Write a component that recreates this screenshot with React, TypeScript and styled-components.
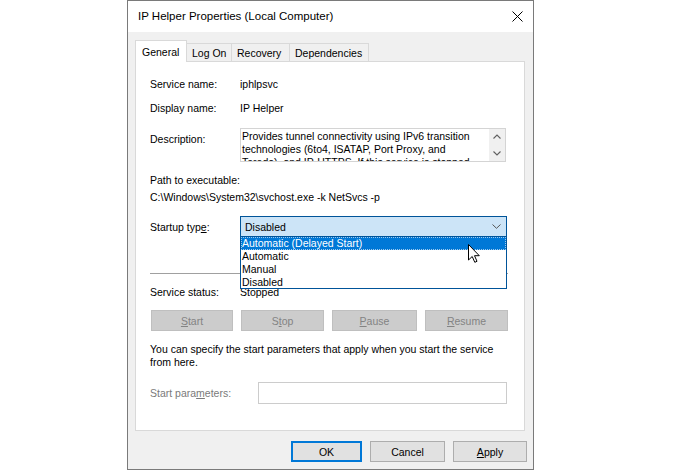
import React from "react";
import styled, { createGlobalStyle } from "styled-components";

const Global = createGlobalStyle`
  html, body { margin: 0; padding: 0; background: #ffffff; }
  body { font-family: "Liberation Sans", Arial, sans-serif; font-size: 10.5px; color: #000; }
  * { box-sizing: border-box; }
`;

const Page = styled.div`
  width: 680px;
  height: 473px;
  padding-left: 127px;
  overflow: hidden;
`;

const Window = styled.div`
  width: 407px;
  height: 470px;
  border: 1px solid #7a7a7a;
  display: flex;
  flex-direction: column;
  background: #f0f0f0;
`;

const TitleBar = styled.div`
  height: 31px;
  flex: none;
  background: #ffffff;
  display: flex;
  align-items: center;
  justify-content: space-between;
  padding: 0 10px 0 10px;
`;

const Title = styled.div`
  font-size: 11.5px;
  color: #000;
  padding-bottom: 1px;
`;

const Body = styled.div`
  flex: 1;
  display: flex;
  flex-direction: column;
  padding: 8px 8px 7px 7px;
`;

const TabStrip = styled.div`
  display: flex;
  align-items: flex-end;
  height: 21px;
`;

const Tab = styled.div<{ $w: number; $active?: boolean }>`
  width: ${(p) => p.$w}px;
  height: ${(p) => (p.$active ? 22 : 18)}px;
  margin-bottom: ${(p) => (p.$active ? -1 : 0)}px;
  background: ${(p) => (p.$active ? "#ffffff" : "#f0f0f0")};
  border: 1px solid #d9d9d9;
  border-bottom: none;
  ${(p) => (p.$active ? "" : "border-left: none;")}
  position: relative;
  z-index: ${(p) => (p.$active ? 1 : 0)};
  display: flex;
  align-items: center;
  padding-left: ${(p) => (p.$active ? 6 : 5)}px;
  padding-top: ${(p) => (p.$active ? 0 : 1)}px;
  font-size: 10.5px;
`;

const Panel = styled.div`
  height: 370px;
  background: #ffffff;
  border: 1px solid #d9d9d9;
  padding: 14px 16px 0 14px;
  display: flex;
  flex-direction: column;
`;

const Row = styled.div<{ $mt?: number; $h?: number }>`
  display: flex;
  align-items: center;
  margin-top: ${(p) => p.$mt ?? 0}px;
  height: ${(p) => p.$h ?? 16}px;
  flex: none;
`;

const TopRow = styled.div<{ $mt?: number }>`
  display: flex;
  align-items: flex-start;
  margin-top: ${(p) => p.$mt ?? 0}px;
  flex: none;
`;

const Label = styled.div<{ $w?: number; $muted?: boolean; $pt?: number }>`
  width: ${(p) => p.$w ?? 90}px;
  flex: none;
  line-height: 16px;
  padding-top: ${(p) => p.$pt ?? 0}px;
  color: ${(p) => (p.$muted ? "#7a7a7a" : "#000")};
  white-space: nowrap;
`;

const Value = styled.div`
  line-height: 16px;
  white-space: nowrap;
`;

const TextLine = styled.div<{ $mt?: number }>`
  line-height: 16px;
  height: 16px;
  margin-top: ${(p) => p.$mt ?? 0}px;
  white-space: nowrap;
  flex: none;
`;

const DescBox = styled.div`
  width: 266px;
  height: 34px;
  border: 1px solid #d4d4d4;
  display: flex;
  overflow: hidden;
`;

const DescText = styled.div`
  flex: 1;
  padding: 1px 0 0 1px;
  overflow: hidden;
  line-height: 13px;
`;

const DescLine = styled.div`
  white-space: nowrap;
  height: 13px;
`;

const ScrollTrack = styled.div`
  width: 16px;
  flex: none;
  background: #f0f0f0;
  display: flex;
  flex-direction: column;
  align-items: center;
  justify-content: space-between;
  padding: 5px 0 5px 0;
`;

const SelectWrap = styled.div`
  position: relative;
  width: 267px;
  height: 21px;
`;

const SelectBox = styled.div`
  height: 21px;
  background: #cce4f7;
  border: 1px solid #005499;
  display: flex;
  align-items: center;
  justify-content: space-between;
  padding: 0 5px 0 4px;
`;

const DropList = styled.div`
  position: absolute;
  left: 0;
  top: 20px;
  width: 267px;
  height: 53px;
  background: #ffffff;
  border: 1px solid #005499;
  z-index: 5;
`;

const DropItem = styled.div<{ $sel?: boolean }>`
  height: 13px;
  line-height: 13px;
  padding-left: 1px;
  background: ${(p) => (p.$sel ? "#0078d7" : "transparent")};
  color: ${(p) => (p.$sel ? "#ffffff" : "#000")};
  outline: ${(p) => (p.$sel ? "1px dotted #9ec9ee" : "none")};
  outline-offset: -1px;
  font-size: 10.5px;
  white-space: nowrap;
`;

const Cursor = styled.svg`
  position: absolute;
  left: 227px;
  top: 7px;
  z-index: 6;
`;

const Separator = styled.div<{ $mt: number }>`
  height: 1px;
  background: #a0a0a0;
  margin-top: ${(p) => p.$mt}px;
  flex: none;
`;

const ButtonRow = styled.div<{ $mt: number }>`
  display: flex;
  justify-content: space-between;
  margin-top: ${(p) => p.$mt}px;
  padding-left: 1px;
  flex: none;
`;

const DisabledButton = styled.div<{ $w: number }>`
  width: ${(p) => p.$w}px;
  height: 21px;
  background: #cccccc;
  border: 1px solid #bfbfbf;
  color: #838383;
  display: flex;
  align-items: center;
  justify-content: center;
`;

const Info = styled.div<{ $mt: number }>`
  margin-top: ${(p) => p.$mt}px;
  line-height: 13px;
  flex: none;
`;

const InfoLine = styled.div`
  white-space: nowrap;
  height: 13px;
`;

const Input = styled.div`
  width: 249px;
  height: 22px;
  border: 1px solid #cccccc;
  background: #ffffff;
`;

const Footer = styled.div`
  display: flex;
  justify-content: flex-end;
  gap: 8px;
  margin-top: 10px;
  margin-right: -2px;
`;

const DialogButton = styled.div<{ $w: number; $default?: boolean }>`
  width: ${(p) => p.$w}px;
  height: 21px;
  background: #e1e1e1;
  border: ${(p) => (p.$default ? "2px solid #0078d7" : "1px solid #adadad")};
  display: flex;
  align-items: center;
  justify-content: center;
  color: #000;
`;

const U = styled.span`
  text-decoration: underline;
  text-underline-offset: 1px;
`;

const Chevron = ({ dir }: { dir: "up" | "down" }) => (
  <svg width="8" height="5" viewBox="0 0 8 5">
    <path
      d={dir === "up" ? "M0.5 4.5 L4 1 L7.5 4.5" : "M0.5 0.5 L4 4 L7.5 0.5"}
      fill="none"
      stroke="#606060"
      strokeWidth="1.1"
    />
  </svg>
);

export default function App() {
  return (
    <>
      <Global />
      <Page>
        <Window>
          <TitleBar>
            <Title>IP Helper Properties (Local Computer)</Title>
            <svg width="11" height="11" viewBox="0 0 11 11">
              <path d="M0.5 0.5 L10.5 10.5 M10.5 0.5 L0.5 10.5" stroke="#000" strokeWidth="1" />
            </svg>
          </TitleBar>
          <Body>
            <TabStrip>
              <Tab $w={52} $active>General</Tab>
              <Tab $w={45}>Log On</Tab>
              <Tab $w={58}>Recovery</Tab>
              <Tab $w={79}>Dependencies</Tab>
            </TabStrip>
            <Panel>
              <Row>
                <Label>Service name:</Label>
                <Value>iphlpsvc</Value>
              </Row>
              <Row $mt={8}>
                <Label>Display name:</Label>
                <Value>IP Helper</Value>
              </Row>
              <TopRow $mt={12}>
                <Label $pt={3}>Description:</Label>
                <DescBox>
                  <DescText>
                    <DescLine>Provides tunnel connectivity using IPv6 transition</DescLine>
                    <DescLine>technologies (6to4, ISATAP, Port Proxy, and</DescLine>
                    <DescLine>Teredo), and IP-HTTPS. If this service is stopped,</DescLine>
                  </DescText>
                  <ScrollTrack>
                    <Chevron dir="up" />
                    <Chevron dir="down" />
                  </ScrollTrack>
                </DescBox>
              </TopRow>
              <TextLine $mt={10}>Path to executable:</TextLine>
              <TextLine $mt={1}>C:\Windows\System32\svchost.exe -k NetSvcs -p</TextLine>
              <Row $mt={11} $h={21}>
                <Label>
                  Startup typ<U>e</U>:
                </Label>
                <SelectWrap>
                  <SelectBox>
                    <span>Disabled</span>
                    <svg width="9" height="5" viewBox="0 0 9 5">
                      <path d="M0.5 0.5 L4.5 4.3 L8.5 0.5" fill="none" stroke="#555" strokeWidth="1" />
                    </svg>
                  </SelectBox>
                  <DropList>
                    <DropItem $sel>Automatic (Delayed Start)</DropItem>
                    <DropItem>Automatic</DropItem>
                    <DropItem>Manual</DropItem>
                    <DropItem>Disabled</DropItem>
                    <Cursor width="12" height="19" viewBox="0 0 12 19">
                      <path
                        d="M0.5 0.5 L0.5 16 L4.2 12.5 L6.8 18.3 L9 17.3 L6.5 11.7 L11.3 11.7 Z"
                        fill="#ffffff"
                        stroke="#000"
                        strokeWidth="1"
                        strokeLinejoin="miter"
                      />
                    </Cursor>
                  </DropList>
                </SelectWrap>
              </Row>
              <Separator $mt={36} />
              <Row $mt={10}>
                <Label>Service status:</Label>
                <Value>Stopped</Value>
              </Row>
              <ButtonRow $mt={10}>
                <DisabledButton $w={82}>
                  <span>
                    <U>S</U>tart
                  </span>
                </DisabledButton>
                <DisabledButton $w={83}>
                  <span>
                    S<U>t</U>op
                  </span>
                </DisabledButton>
                <DisabledButton $w={85}>
                  <span>
                    <U>P</U>ause
                  </span>
                </DisabledButton>
                <DisabledButton $w={83}>
                  <span>
                    <U>R</U>esume
                  </span>
                </DisabledButton>
              </ButtonRow>
              <Info $mt={12}>
                <InfoLine>You can specify the start parameters that apply when you start the service</InfoLine>
                <InfoLine>from here.</InfoLine>
              </Info>
              <Row $mt={13} $h={22}>
                <Label $w={108} $muted>
                  Start para<U>m</U>eters:
                </Label>
                <Input />
              </Row>
            </Panel>
            <Footer>
              <DialogButton $w={71} $default>
                OK
              </DialogButton>
              <DialogButton $w={75}>Cancel</DialogButton>
              <DialogButton $w={74}>
                <span>
                  <U>A</U>pply
                </span>
              </DialogButton>
            </Footer>
          </Body>
        </Window>
      </Page>
    </>
  );
}
